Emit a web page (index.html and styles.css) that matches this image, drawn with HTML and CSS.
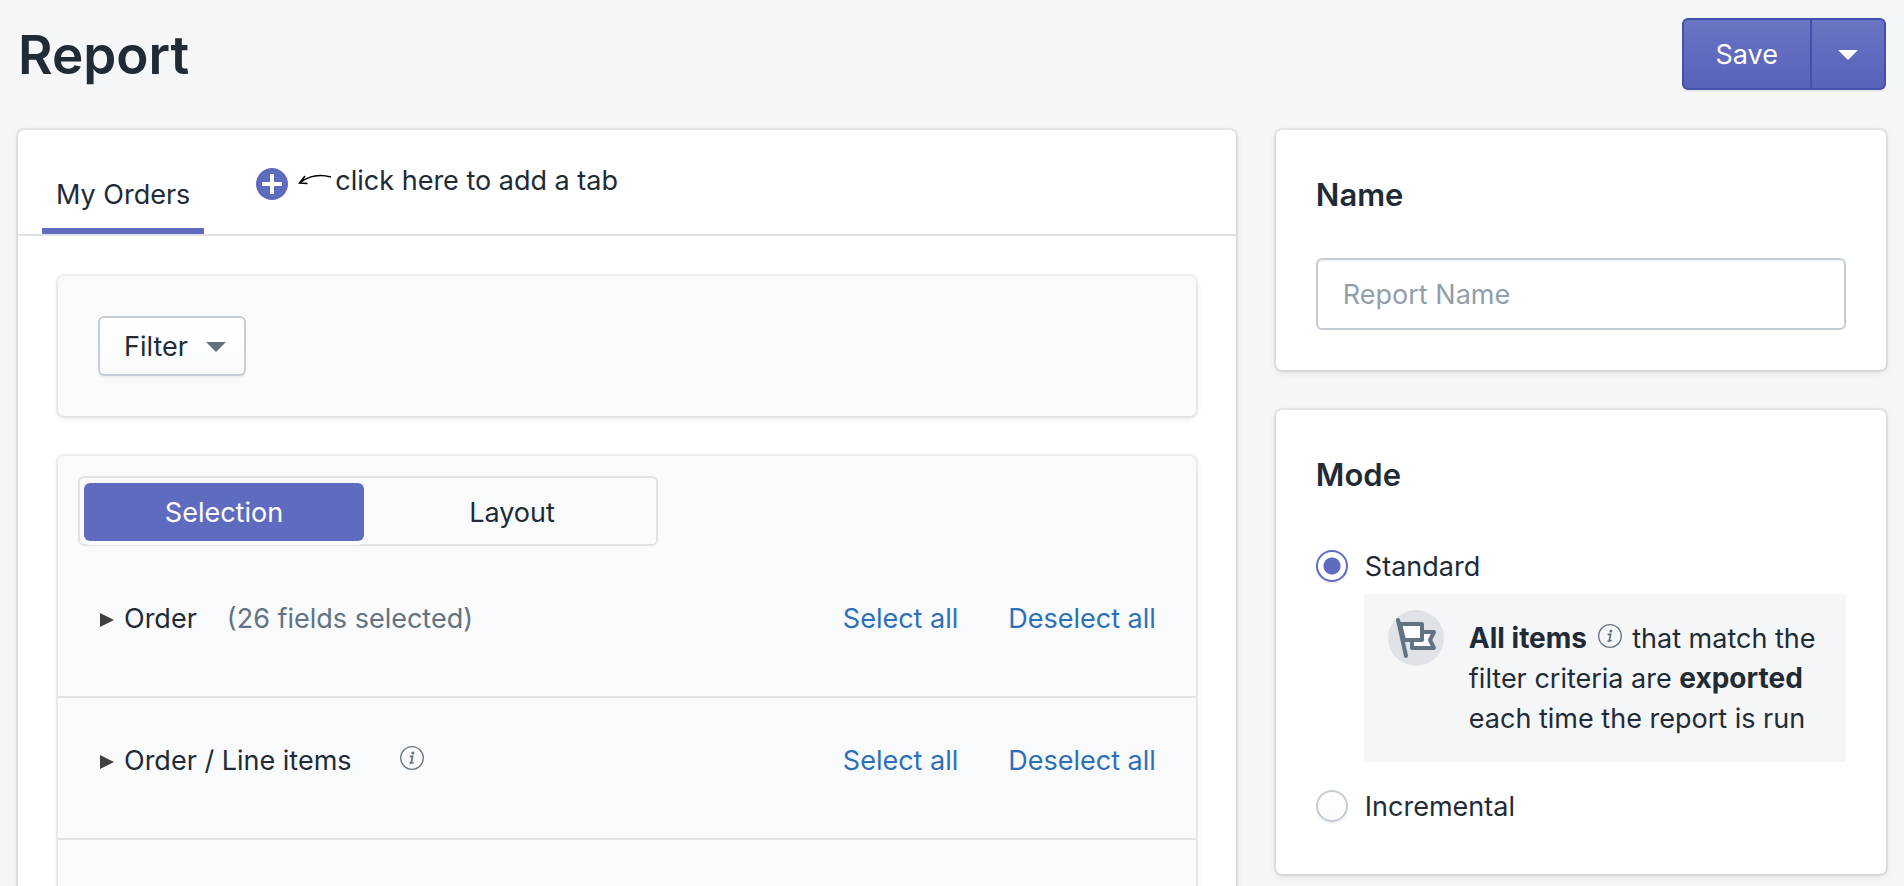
FILE: index.html
```html
<!DOCTYPE html>
<html lang="en">
<head>
<meta charset="utf-8">
<title>Report</title>
<link rel="stylesheet" href="styles.css">
</head>
<body>
<svg class="sprite" aria-hidden="true">
  <symbol id="info" viewBox="0 0 24 24">
    <circle cx="12" cy="12" r="11.3" fill="none" stroke="currentColor" stroke-width="1.3"/>
    <circle cx="12.9" cy="7.1" r="1.5" fill="currentColor"/>
    <path d="M9.700 10.700l3-.6-1.500 6.600M9.500 17.300l4.200-.8" fill="none" stroke="currentColor" stroke-width="1.7" stroke-linejoin="round"/>
  </symbol>
</svg>
<header class="page-header">
  <h1 class="title">Report</h1>
  <div class="save-group">
    <button class="save" type="button">Save</button>
    <button class="save-more" type="button" aria-label="More save options"><svg width="20" height="10" viewBox="0 0 20 10"><path d="M0 0h20L10 10z" fill="currentColor"/></svg></button>
  </div>
</header>
<main class="columns">
  <section class="card report">
    <div class="tabs">
      <button class="tab" type="button">My Orders</button>
      <div class="add">
        <button class="add-tab" type="button" aria-label="Add tab"><svg width="32" height="32" viewBox="0 0 32 32"><circle cx="16" cy="16" r="16" fill="#5f6bbf"/><path d="M16 6v20M6 16h20" stroke="#fff" stroke-width="4"/></svg></button>
        <svg class="arrow" width="34" height="12" viewBox="0 0 34 12"><path d="M33 3C22 0 11 2 3 8M7 2L1.500 9l8 .5" fill="none" stroke="#000" stroke-width="1.500"/></svg>
        <span class="hint">click here to add a tab</span>
      </div>
    </div>
    <div class="panels">
      <div class="panel filter-panel">
        <button class="filter" type="button">Filter <svg width="20" height="10" viewBox="0 0 20 10"><path d="M0 0h20L10 10z" fill="#637381"/></svg></button>
      </div>
      <div class="panel">
        <div class="segmented">
          <button class="segment active" type="button">Selection</button>
          <button class="segment" type="button">Layout</button>
        </div>
        <div class="row first">
          <svg class="marker" width="14" height="14" viewBox="0 0 14 14"><path d="M0 0l14 7L0 14z" fill="currentColor"/></svg>
          <span>Order</span><span class="count">(26 fields selected)</span>
          <a class="link" href="#">Select all</a><a class="link" href="#">Deselect all</a>
        </div>
        <div class="row">
          <svg class="marker" width="14" height="14" viewBox="0 0 14 14"><path d="M0 0l14 7L0 14z" fill="currentColor"/></svg>
          <span>Order / Line items</span><svg class="info row-info" width="24" height="24"><use href="#info"/></svg>
          <a class="link" href="#">Select all</a><a class="link" href="#">Deselect all</a>
        </div>
        <div class="row"></div>
      </div>
    </div>
  </section>
  <aside class="side">
    <section class="card name-card">
      <h2 class="heading"><label for="name">Name</label></h2>
      <input class="name-input" id="name" type="text" placeholder="Report Name">
    </section>
    <section class="card mode-card">
      <h2 class="heading">Mode</h2>
      <label class="choice"><input class="radio" type="radio" name="mode" checked><span>Standard</span></label>
      <div class="note">
        <svg class="flag" width="56" height="56" viewBox="0 0 56 56"><circle cx="28" cy="28" r="28" fill="#dfe3e8"/><g stroke="#637381" stroke-width="4" stroke-linecap="round" stroke-linejoin="round"><path d="M24 22h22l-4 8 4 8H24z" fill="#fff"/><path d="M12 14h22v16H16z" fill="#fff"/><path d="M10 10l8 36" fill="none"/></g></svg>
        <p class="note-text"><b>All items</b> <svg class="info note-info" width="24" height="24"><use href="#info"/></svg> that match the filter criteria are <b>exported</b> each time the report is run</p>
      </div>
      <label class="choice"><input class="radio" type="radio" name="mode"><span>Incremental</span></label>
    </section>
  </aside>
</main>
</body>
</html>
```
FILE: styles.css
```css
* {
  box-sizing: border-box;
}

body {
  margin: 0;
  padding: 18px;
  background: #f4f6f8;
  color: #212b36;
  font: 400 27px/40px Inter, "Liberation Sans", sans-serif;
  overflow: hidden;
}

button, input {
  margin: 0;
  font: inherit;
  color: inherit;
}

button {
  padding: 0;
  border: 0;
  background: none;
}

h1, h2, p {
  margin: 0;
}

.sprite {
  position: absolute;
  width: 0;
  height: 0;
}

.page-header {
  display: flex;
  justify-content: space-between;
  height: 72px;
  margin-bottom: 40px;
}

.title {
  font-size: 53px;
  font-weight: 600;
  line-height: 74px;
}

.save-group {
  display: flex;
  border: 2px solid #4350aa;
  border-radius: 6px;
  background: linear-gradient(#6974c3, #5863ba);
  box-shadow: 0 2px 0 rgba(22, 29, 37, 0.05);
  color: #fff;
}

.save {
  padding: 2px 32px 0;
}

.save-more {
  display: grid;
  place-items: center;
  width: 74px;
  padding-top: 2px;
  border-left: 2px solid #4350aa;
}

.columns {
  display: grid;
  grid-template-columns: 1.996fr 1fr;
  gap: 40px;
}

.card {
  background: #fff;
  border-radius: 6px;
  box-shadow: 0 0 0 2px rgba(63, 63, 68, 0.08), 0 2px 6px rgba(63, 63, 68, 0.15);
}

.tabs {
  display: flex;
  padding: 32px 24px 0;
  border-bottom: 2px solid #dfe3e8;
}

.tab {
  height: 72px;
  padding: 0 14px;
  border-bottom: 6px solid #5f6bbf;
}

.add {
  display: flex;
  align-items: flex-start;
  padding-left: 52px;
}

.add-tab {
  height: 32px;
  margin-top: 6px;
}

.add-tab svg {
  display: block;
}

.arrow {
  margin: 12px 3px 0 10px;
}

.hint {
  line-height: 38px;
}

.panels {
  display: grid;
  gap: 40px;
  padding: 40px;
}

.panel {
  background: #f9fafb;
  border-radius: 6px;
  box-shadow: 0 0 0 2px rgba(63, 63, 68, 0.06), 0 2px 6px rgba(63, 63, 68, 0.15);
}

.filter-panel {
  padding: 40px;
}

.filter {
  display: flex;
  align-items: center;
  gap: 18px;
  height: 60px;
  padding: 2px 18px 0 24px;
  border: 2px solid #c4cdd5;
  border-radius: 6px;
  background: linear-gradient(#fff, #f9fafb);
  box-shadow: 0 2px 0 rgba(22, 29, 37, 0.05);
}

.segmented {
  display: grid;
  grid-template-columns: 280px 1fr;
  width: 580px;
  height: 70px;
  margin: 20px 20px 0;
  padding: 5px 4px 3px;
  border: 2px solid #dfe3e8;
  border-radius: 6px;
}

.segment {
  padding: 2px 0 0 8px;
}

.segment.active {
  padding: 2px 0 0;
  border-radius: 6px;
  background: #5f6bbf;
  box-shadow: 0 4px 0 #fcfdfd;
  color: #fff;
}

.row {
  display: flex;
  align-items: flex-start;
  height: 142px;
  padding: 43px 40px 0;
  border-top: 2px solid #dfe3e8;
}

.row.first {
  height: 150px;
  padding-top: 53px;
  border-top: 0;
}

.marker {
  margin: 14px 10px 0 2px;
  color: #3f3f44;
}

.count {
  margin: 0 auto 0 30px;
  color: #637381;
}

.info {
  color: #637381;
}

.row-info {
  margin: 5px auto 0 48px;
}

.link {
  margin-left: 50px;
  color: #2e70b8;
  text-decoration: none;
}

.side {
  display: grid;
  align-content: start;
  gap: 40px;
}

.name-card, .mode-card {
  padding: 40px;
}

.heading {
  margin-bottom: 38px;
  font-size: 31px;
  font-weight: 600;
  line-height: 50px;
}

.name-input {
  display: block;
  width: 100%;
  height: 72px;
  padding: 0 25px;
  border: 2px solid #c4cdd5;
  border-radius: 6px;
  background: #fff;
  box-shadow: inset 0 2px 0 rgba(99, 115, 129, 0.05);
}

.name-input::placeholder {
  color: #919eab;
  opacity: 1;
}

.choice {
  display: flex;
  align-items: center;
  gap: 17px;
  height: 56px;
}

.choice span {
  padding-top: 2px;
}

.radio {
  appearance: none;
  width: 32px;
  height: 32px;
  border: 2px solid #c4cdd5;
  border-radius: 50%;
  background: linear-gradient(#fff, #f9fafb);
  box-shadow: 0 2px 0 rgba(22, 29, 37, 0.05);
}

.radio:checked {
  border-color: #5f6bbf;
  background: radial-gradient(circle, #5f6bbf 8px, #fff 9px);
}

.note {
  display: flex;
  gap: 25px;
  margin: 0 0 16px 48px;
  padding: 16px 20px 16px 24px;
  background: #f4f6f8;
}

.flag {
  flex: none;
}

.note-text {
  padding: 9px 0 7px;
}

.note-text b {
  font-size: 28px;
  line-height: 28px;
}

.note-info {
  margin: 0 3px;
}
```
